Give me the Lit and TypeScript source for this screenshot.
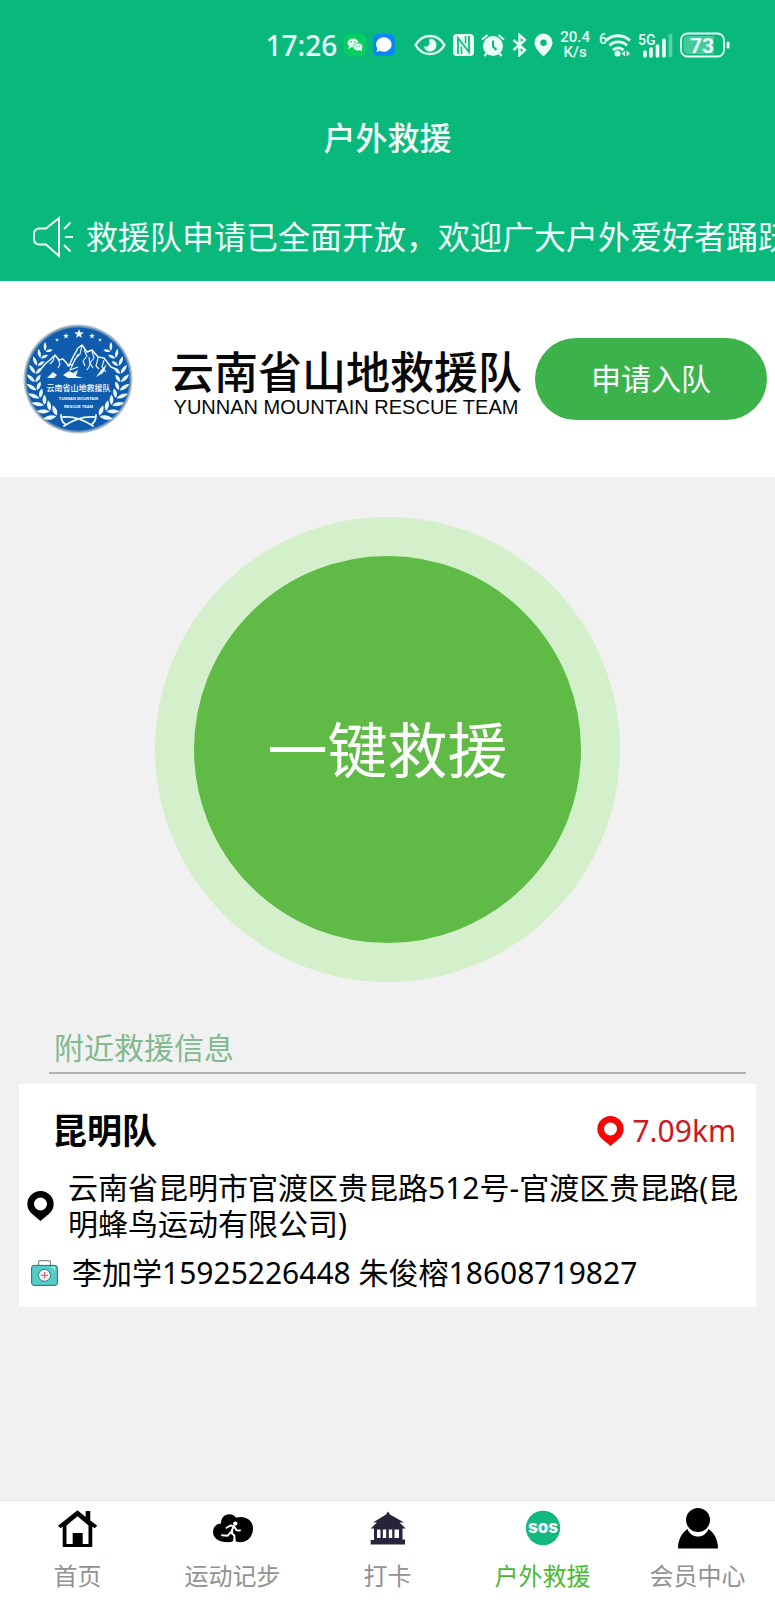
import { LitElement, html, svg, css } from "lit";
import { customElement, property, state } from "lit/decorators.js";
import { classMap } from "lit/directives/class-map.js";

const LEAF_ANGLES = [0, 1, 2, 3, 4, 5, 6, 7, 8, 9];

@customElement("status-bar")
export class StatusBar extends LitElement {
  static styles = css`
    :host {
      display: flex;
      align-items: center;
      justify-content: flex-end;
      gap: 7px;
      height: 90px;
      padding-right: 45px;
      color: #eafff6;
      font-family: "Noto Sans", "Noto Sans CJK SC", sans-serif;
    }
    svg {
      display: block;
      flex: none;
    }
    time {
      font-size: 28px;
      line-height: 32px;
      font-weight: 500;
    }
    .system {
      margin-left: 12px;
    }
    .speed {
      display: flex;
      flex-direction: column;
      margin-right: 2px;
      font: 500 15px/15px Roboto, sans-serif;
      text-align: center;
    }
    .small {
      font: 500 14px Roboto, sans-serif;
    }
    .level {
      font: 700 21px Roboto, sans-serif;
    }
  `;

  render() {
    return html`
      <time>17:26</time>
      <svg width="22" height="22" viewBox="0 0 22 22">
        <rect width="22" height="22" rx="5" fill="#06cf5f" />
        <ellipse cx="9" cy="9" rx="5.4" ry="4.6" fill="#eafff1" />
        <path d="M5 12l-.6 3 3-1.6z" fill="#eafff1" />
        <ellipse cx="14" cy="13" rx="4.8" ry="4" fill="#eafff1" stroke="#06cf5f" stroke-width=".8" />
        <path d="M16 16l2 1.8-.3-3z" fill="#eafff1" />
        <g fill="#06cf5f">
          <circle cx="7.2" cy="7.8" r=".8" /><circle cx="10.8" cy="7.8" r=".8" />
          <circle cx="12.4" cy="12.2" r=".6" /><circle cx="15.4" cy="12.2" r=".6" />
        </g>
      </svg>
      <svg width="22" height="22" viewBox="0 0 22 22">
        <rect width="22" height="22" rx="5" fill="#0b87f5" />
        <path d="M11 3.2a7.8 7.3 0 1 1-4.2 13.5L3.4 18l.9-3.6A7.6 7.3 0 0 1 11 3.2z" fill="#fff" />
      </svg>
      <svg class="system" width="32" height="22" viewBox="0 0 32 22">
        <path d="M1.5 11C5 5 10 2 16 2s11 3 14.500 9C27 17 22 20 16 20S5 17 1.500 11z" fill="none" stroke="currentColor" stroke-width="2.4" />
        <path d="M16 4.500a6.500 6.500 0 1 1-6.400 7.500c2 1.200 5.400.4 5.800-2.600.2-1.600-.4-3.600.6-4.900z" fill="currentColor" />
      </svg>
      <svg width="21" height="22" viewBox="0 0 21 22">
        <rect width="21" height="22" rx="4" fill="currentColor" />
        <path d="M5 20V4L16 18V2" fill="none" stroke="#09b97c" stroke-width="1.800" />
        <path d="M8.500 20V12.500M12.500 2v7.500" fill="none" stroke="#09b97c" stroke-width="1.500" />
      </svg>
      <svg width="24" height="24" viewBox="0 0 24 24">
        <circle cx="12" cy="13" r="10" fill="currentColor" />
        <path d="M1 6.500L6.500 2M23 6.500L17.500 2M5.500 20.500L3.500 23M18.500 20.500L20.500 23" stroke="currentColor" stroke-width="2.200" />
        <path d="M12 7.500V13.500L15.500 17" fill="none" stroke="#09b97c" stroke-width="2" />
      </svg>
      <svg width="15" height="24" viewBox="0 0 15 24">
        <path d="M1.500 7L13 17 7.500 22V2L13 7 1.500 17" fill="none" stroke="currentColor" stroke-width="2.400" />
      </svg>
      <svg width="19" height="24" viewBox="0 0 19 24">
        <path fill-rule="evenodd" d="M9.500.5a9 9 0 0 1 9 9c0 5-5 10.500-9 14-4-3.500-9-9-9-14a9 9 0 0 1 9-9zm0 6a3.200 3.200 0 1 0 0 6.400 3.200 3.200 0 0 0 0-6.400z" fill="currentColor" />
      </svg>
      <span class="speed"><span>20.4</span><span>K/s</span></span>
      <svg width="32" height="26" viewBox="0 0 32 26">
        <text x="0" y="12" class="small" fill="currentColor">6</text>
        <g fill="none" stroke="currentColor" stroke-width="2.800">
          <path d="M7 8.500a17.500 17.500 0 0 1 24 0" />
          <path d="M10.500 13.500a12.500 12.500 0 0 1 17.500 0" />
          <path d="M14 18a7.500 7.500 0 0 1 10.500 0" />
        </g>
        <circle cx="18.500" cy="21.500" r="3" fill="currentColor" />
        <path d="M26 18.500v6l-3.500-3zM27.500 18.500v6l3.500-3z" fill="currentColor" />
      </svg>
      <svg width="35" height="26" viewBox="0 0 35 26">
        <text x="0" y="13" class="small" fill="currentColor">5G</text>
        <path d="M7 24v-4M13 24v-7M19.500 24V14M26 24V8" stroke="currentColor" stroke-width="3.600" stroke-linecap="round" />
        <path d="M32.500 25V2" stroke="currentColor" stroke-opacity=".35" stroke-width="3.600" />
      </svg>
      <svg width="50" height="26" viewBox="0 0 50 26">
        <rect x="1" y="1.500" width="43" height="23" rx="6.500" fill="none" stroke="currentColor" stroke-width="1.800" />
        <path d="M8 4h26v18H8a4.500 4.500 0 0 1-4.500-4.500v-9A4.500 4.500 0 0 1 8 4z" fill="currentColor" fill-opacity=".25" />
        <rect x="46.500" y="9.500" width="3" height="7" rx="1.500" fill="currentColor" />
        <text x="22" y="20.500" text-anchor="middle" class="level" fill="currentColor">73</text>
      </svg>
    `;
  }
}

@customElement("team-badge")
export class TeamBadge extends LitElement {
  static styles = css`
    :host {
      display: block;
      flex: none;
    }
    svg {
      display: block;
    }
    .cn {
      font: 500 8px "Noto Sans CJK SC", sans-serif;
    }
    .en {
      font: 700 4px "Liberation Sans", sans-serif;
    }
  `;

  private star(x: number, y: number, r: number) {
    const points = Array.from({ length: 10 }, (_, i) => {
      const a = (i * Math.PI) / 5 - Math.PI / 2;
      const d = i % 2 ? r * 0.42 : r;
      return `${(x + d * Math.cos(a)).toFixed(2)},${(y + d * Math.sin(a)).toFixed(2)}`;
    }).join(" ");
    return svg`<polygon points=${points} />`;
  }

  private branch() {
    return LEAF_ANGLES.map((i) => {
      const deg = 124 + i * 11;
      const a = (deg * Math.PI) / 180;
      const x = 55 + 43 * Math.cos(a);
      const y = 55 + 43 * Math.sin(a);
      const size = 1.9 - i * 0.07;
      return svg`<g transform="translate(${x.toFixed(1)} ${y.toFixed(1)}) rotate(${deg - 180}) scale(${size.toFixed(2)})">
        <path d="M0 1.500C-.5-1-2.500-3-5-3.500-4.600-1-2.500 1.200 0 1.500zM.4 1.500C2.500 1 3.800-1 3.600-3.200 1.500-2.600.2-.8.4 1.500z" />
      </g>`;
    });
  }

  render() {
    return html`
      <svg width="110" height="110" viewBox="0 0 110 110" role="img" aria-label="云南省山地救援队">
        <circle cx="55" cy="55" r="54.500" fill="#b9c2c8" />
        <circle cx="55" cy="55" r="53" fill="#5f8fb8" />
        <circle cx="55" cy="55" r="51.500" fill="#0f5cae" />
        <g fill="#eef8ff">
          ${this.star(56, 10, 5)} ${this.star(43, 12, 3)} ${this.star(69, 12, 3)}
          ${this.star(34, 16, 2)} ${this.star(77, 16, 2)}
          <g>${this.branch()}</g>
          <g transform="translate(110 0) scale(-1 1)">${this.branch()}</g>
        </g>
        <g fill="none" stroke="#eef8ff" stroke-width="1.100" stroke-linejoin="round">
          <path d="M17 46L23 39 27 36 32 31 36 36 40 35 46 42 50 33 55 24 59 21 64 28 69 26 75 33 81 34 88 43 95 46" stroke-width="1.500" />
          <path d="M32 31L30 37 27 40M35 35L37 40 35 44M59 21L57 30 52 35 49 42M61 26L64 32 60 37 62 42M55 30L51 38M69 27L71 34 67 39 70 44M75 34L73 42 76 45M81 36L79 43 83 48M66 33L67 41 64 46" />
          <path d="M44 42L50 40 47 46 55 43" />
        </g>
        <path d="M24 54L30 48 34 51 31 54zM40 51L46 47 50 49 55 46 53 52 60 54H45zM73 53L78 46 84 40 80 49z" fill="#eef8ff" />
        <text x="55.500" y="67" text-anchor="middle" class="cn" fill="#fff">云南省山地救援队</text>
        <text x="55.500" y="76" text-anchor="middle" class="en" fill="#fff">YUNNAN MOUNTAIN</text>
        <text x="55.500" y="84" text-anchor="middle" class="en" fill="#fff">RESCUE TEAM</text>
        <g fill="none" stroke="#eef8ff" stroke-width="1.800" stroke-linecap="round">
          <path d="M38 91c0 5 1 7 4 9M40 93c12-1 21 3 30 9" />
          <path d="M73 91c0 5-1 7-4 9M71 93c-12-1-21 3-30 9" />
        </g>
      </svg>
    `;
  }
}

@customElement("map-pin")
export class MapPin extends LitElement {
  static styles = css`
    :host {
      display: block;
      flex: none;
    }
    svg {
      display: block;
    }
  `;
  render() {
    return html`<svg width="27" height="30" viewBox="0 0 27 30" aria-hidden="true">
      <path fill="currentColor" fill-rule="evenodd" d="M13.500 0A13.200 13.200 0 0 1 26.700 13c0 4-1.500 6.500-4 9.300L13.500 30l-9.200-7.700C1.800 19.500.3 17 .3 13A13.200 13.200 0 0 1 13.500 0zm0 6.500a6.500 6.500 0 1 0 0 13 6.500 6.500 0 0 0 0-13z" />
    </svg>`;
  }
}

interface Team {
  name: string;
  distance: string;
  address: string;
  contacts: string;
}

@customElement("team-card")
export class TeamCard extends LitElement {
  @property({ attribute: false }) team!: Team;

  static styles = css`
    :host {
      display: block;
      padding: 23px 0 16px;
      background: #fff;
      color: #000;
    }
    header {
      display: flex;
      align-items: center;
      justify-content: space-between;
      padding: 0 20px 0 33px;
    }
    h3 {
      margin: 0;
      font-size: 35px;
      line-height: 48px;
      font-weight: 700;
    }
    .distance {
      display: flex;
      align-items: center;
      gap: 8px;
      color: #d0181b;
      font-size: 30px;
      line-height: 36px;
    }
    .distance map-pin {
      color: #f30808;
    }
    .row {
      display: flex;
      align-items: center;
      gap: 14px;
      padding: 0 4px 0 8px;
      margin-top: 15px;
      font-size: 30px;
      line-height: 36px;
    }
    .contact {
      padding-left: 12px;
      margin-top: 13px;
    }
    p {
      margin: 0;
      overflow-wrap: anywhere;
    }
    svg {
      display: block;
      flex: none;
    }
  `;

  render() {
    const { name, distance, address, contacts } = this.team;
    return html`
      <header>
        <h3>${name}</h3>
        <span class="distance"><map-pin></map-pin>${distance}</span>
      </header>
      <div class="row"><map-pin></map-pin><p>${address}</p></div>
      <div class="row contact">
        <svg width="27" height="26" viewBox="0 0 27 26" aria-hidden="true">
          <path d="M7.500 5.500V2.500a1.800 1.800 0 0 1 1.800-1.800h8.400a1.800 1.800 0 0 1 1.800 1.800v3" fill="none" stroke="#7f9092" stroke-width="1.200" />
          <rect x=".6" y="5.400" width="25.800" height="20" rx="2.500" fill="#53cbc6" stroke="#39686d" stroke-width="1" />
          <path d="M20 7.500h3.500v3" fill="none" stroke="#c5f3f0" stroke-width="1" />
          <circle cx="13.500" cy="15.300" r="6" fill="#e4f7f8" stroke="#39686d" stroke-width=".9" />
          <path d="M13.500 12v6.600M10.200 15.300h6.600" stroke="#ee5c63" stroke-width="1.200" />
        </svg>
        <p>${contacts}</p>
      </div>
    `;
  }
}

const TABS = [
  {
    label: "首页",
    icon: svg`<path d="M19.500.3L27.700 7V1H32.300V10.500L39.300 15.800 36.600 18.300 34.300 16.600V37H4.700V16.600L2.700 18.300 0 15.800zM19.500 6.200L8.500 15.500V34H14.700V23H24.700V34H30.500V15.500z" fill="#000" fill-rule="evenodd"/>`,
  },
  {
    label: "运动记步",
    icon: svg`<path d="M8 13.500C8 8 11.500 4.300 16 4.300c3.500 0 5.500 1.200 7 3.500C32 5 40 10 40 18.500 40 26.500 34.500 32.300 27 32.300c-2 0-4-.5-5-1.200l-1.200-4-.8 4c-1 .8-3 1.200-5 1.200C6 32.300 0 28.500 0 22 0 17 3 13.800 8 13.500z" fill="#000"/>
      <circle cx="22.300" cy="13.600" r="2.200" fill="#fff"/>
      <path d="M20.500 15.500l-3 6.500 2.500 2.500z" fill="#fff"/>
      <path d="M13.500 17.800l4-2.300 3.500.8 2.500 4 3.500.2M20.500 16.500l-2.500 6 3.300 3 .5 5.500M17.500 22.500L14.500 25.800 9 25.300" fill="none" stroke="#fff" stroke-width="1.900" stroke-linecap="round" stroke-linejoin="round"/>`,
  },
  {
    label: "打卡",
    icon: svg`<path d="M20 1.500L22 4.500 36 12.500H31.500L37.700 18.500H34.500V29.500H37V34.500H2.700V30H6V18.500H2.700L9 12.500H5L18 4.500z" fill="#25243a"/>
      <path d="M9 19.500h3.500v8.500H9zM14.800 19.500h3.400v8.500h-3.400zM20.800 19.500h3.400v8.500h-3.400zM26.500 19.500H31v8.500h-4.500z" fill="#fff"/>`,
  },
  {
    label: "户外救援",
    icon: svg`<circle cx="20" cy="18" r="17.200" fill="#13b780"/>
      <text x="20" y="23" text-anchor="middle" class="sos" fill="#fff">sos</text>`,
  },
  {
    label: "会员中心",
    icon: svg`<path d="M9.500 19c3.500 10 17.500 10 21 0 6 4 9.500 11 9.500 19.500H0C0 30 3.500 23 9.500 19z" fill="#000"/>
      <circle cx="20" cy="10" r="12" fill="#000"/>`,
  },
];

@customElement("tab-bar")
export class TabBar extends LitElement {
  @state() private current = 3;

  static styles = css`
    :host {
      display: block;
    }
    nav {
      display: grid;
      grid-template-columns: repeat(5, 1fr);
      background: #fff;
      border-top: 1px solid #e6e6e6;
    }
    a {
      display: flex;
      flex-direction: column;
      align-items: center;
      gap: 8px;
      padding: 9px 0 6px;
      color: #929292;
      font-size: 24px;
      line-height: 36px;
      text-decoration: none;
      white-space: nowrap;
    }
    a.active {
      color: #4cb832;
    }
    svg {
      display: block;
      overflow: visible;
    }
    .sos {
      font: 800 17px Inter, sans-serif;
    }
  `;

  private select(event: Event, index: number) {
    event.preventDefault();
    this.current = index;
  }

  render() {
    return html`<nav>
      ${TABS.map(
        (tab, i) => html`<a
          href="#"
          class=${classMap({ active: i === this.current })}
          @click=${(e: Event) => this.select(e, i)}
          ><svg width="40" height="40" viewBox="0 0 40 40" aria-hidden="true">${tab.icon}</svg
          >${tab.label}</a
        >`
      )}
    </nav>`;
  }
}

@customElement("app-root")
export class AppRoot extends LitElement {
  private teams: Team[] = [
    {
      name: "昆明队",
      distance: "7.09km",
      address: "云南省昆明市官渡区贵昆路512号-官渡区贵昆路(昆明蜂鸟运动有限公司)",
      contacts: "李加学15925226448 朱俊榕18608719827",
    },
  ];

  static styles = css`
    :host {
      display: flex;
      flex-direction: column;
      min-height: 100vh;
      background: #f1f1f1;
      font-family: "Noto Sans", "Noto Sans CJK SC", sans-serif;
    }
    .top {
      background: #09b97c;
      color: #f2fffa;
    }
    h1 {
      margin: 0;
      font-size: 32px;
      line-height: 96px;
      font-weight: 500;
      text-align: center;
    }
    .notice {
      display: flex;
      align-items: center;
      gap: 12px;
      padding: 11px 0 4px 33px;
      font-size: 32px;
      line-height: 80px;
      white-space: nowrap;
      overflow: hidden;
    }
    .notice svg {
      flex: none;
    }
    .banner {
      display: flex;
      align-items: center;
      padding: 43px 8px 43px 23px;
      background: #fff;
    }
    .team {
      display: flex;
      flex-direction: column;
      align-items: center;
      flex: 1;
      white-space: nowrap;
      color: #080808;
      padding: 10px 0 0 24px;
    }
    h2 {
      margin: 0;
      font-size: 44px;
      line-height: 46px;
      font-weight: 500;
    }
    .team span {
      font: 400 20px/24px "Liberation Sans", sans-serif;
    }
    button {
      border: 0;
      margin: 0;
      color: #fff;
      font-family: inherit;
      cursor: pointer;
    }
    .join {
      flex: none;
      padding: 0 56px;
      border-radius: 41px;
      background: #3cb34a;
      font-size: 30px;
      line-height: 82px;
    }
    main {
      flex: 1;
      padding: 40px 19px 24px;
    }
    .rescue {
      display: block;
      box-sizing: border-box;
      width: 60vw;
      aspect-ratio: 1;
      margin: 0 auto;
      padding: 0;
      border: 39px solid #d4f0ca;
      border-radius: 50%;
      background: #5fbb46;
      font-size: 60px;
      line-height: 72px;
    }
    .nearby {
      margin: 42px 10px 10px 30px;
      padding: 0 0 1px 5px;
      border-bottom: 2px solid #b3b1b3;
      color: #83b98e;
      font-size: 30px;
      line-height: 47px;
      font-weight: 400;
    }
  `;

  render() {
    return html`
      <div class="top">
        <status-bar></status-bar>
        <h1>户外救援</h1>
        <div class="notice">
          <svg width="41" height="42" viewBox="0 0 41 42" aria-hidden="true">
            <path d="M26 2v38L13 28.500H6a5 5 0 0 1-5-5v-6a5 5 0 0 1 5-5h7z" fill="none" stroke="currentColor" stroke-width="2" />
            <path d="M31 13l6.500-6.500M32 21h8M31 29l6.500 6.500" stroke="currentColor" stroke-width="2" />
          </svg>
          <span>救援队申请已全面开放，欢迎广大户外爱好者踊跃报名</span>
        </div>
      </div>
      <section class="banner">
        <team-badge></team-badge>
        <div class="team">
          <h2>云南省山地救援队</h2>
          <span>YUNNAN MOUNTAIN RESCUE TEAM</span>
        </div>
        <button class="join" type="button">申请入队</button>
      </section>
      <main>
        <button class="rescue" type="button">一键救援</button>
        <h2 class="nearby">附近救援信息</h2>
        ${this.teams.map((team) => html`<team-card .team=${team}></team-card>`)}
      </main>
      <tab-bar></tab-bar>
    `;
  }
}
